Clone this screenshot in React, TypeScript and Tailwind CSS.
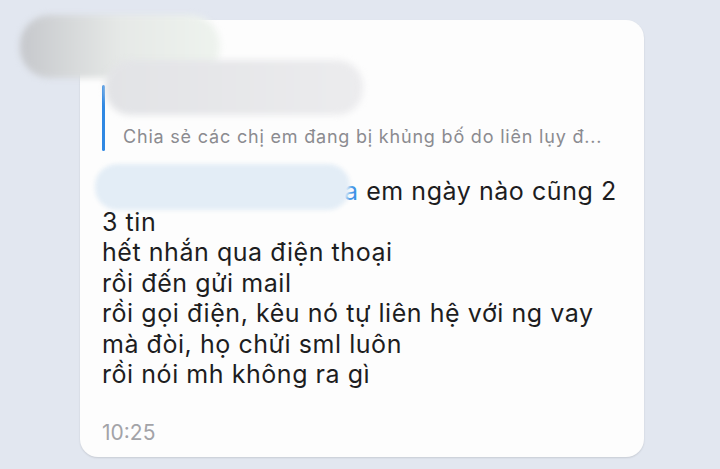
const lines = [
  "3 tin",
  "hết nhắn qua điện thoại",
  "rồi đến gửi mail",
  "rồi gọi điện, kêu nó tự liên hệ với ng vay",
  "mà đòi, họ chửi sml luôn",
  "rồi nói mh không ra gì",
];

const App = () => {
  return (
    <div
      className="relative h-[469px] w-[720px] overflow-hidden bg-[#e2e7f0] pl-[80px] pt-[20px]"
      style={{ fontFamily: "Inter, 'Noto Sans', sans-serif" }}
    >
      <div className="flex h-[437px] w-[564px] flex-col rounded-[18px] bg-[#fdfdfd] pl-[22px] pr-[10px] pt-[65px] shadow-[0_1px_2px_rgba(0,0,0,0.12)]">
        {/* reply quote */}
        <div className="flex">
          <div className="w-[3px] rounded-full bg-[#2f88e3]" />
          <div className="flex flex-col pl-[18px]">
            <div className="h-[37px]" />
            <div className="text-[18px] leading-[29px] tracking-[0.8px] text-[#8b8b90]">
              Chia sẻ các chị em đang bị khủng bố do liên lụy đ...
            </div>
          </div>
        </div>

        {/* message */}
        <div className="mt-[25px] text-[25px] leading-[30.5px] tracking-[0.55px] text-[#1d1d1f]">
          <div>
            <span className="inline-block w-[242px]" />
            <span className="text-[#3f93e6]">a</span> em ngày nào cũng 2
          </div>
          {lines.map((l) => (
            <div key={l}>{l}</div>
          ))}
        </div>

        <div className="mt-[30px] text-[21px] leading-[25px] text-[#a3a3a8]">10:25</div>
      </div>

      {/* blurred areas */}
      <div className="absolute left-[20px] top-[15px] h-[63px] w-[200px] rounded-[30px] bg-gradient-to-r from-[#c6c8cc] via-[#e6e9e7] to-[#eef3ee] blur-[3px]" />
      <div className="absolute left-[105px] top-[60px] h-[55px] w-[258px] rounded-[26px] bg-gradient-to-r from-[#e2e3e6] to-[#ececee] blur-[3px]" />
      <div className="absolute left-[95px] top-[164px] h-[46px] w-[255px] rounded-[22px] bg-[#e3edf6] blur-[2px]" />
    </div>
  );
};

export default App;
